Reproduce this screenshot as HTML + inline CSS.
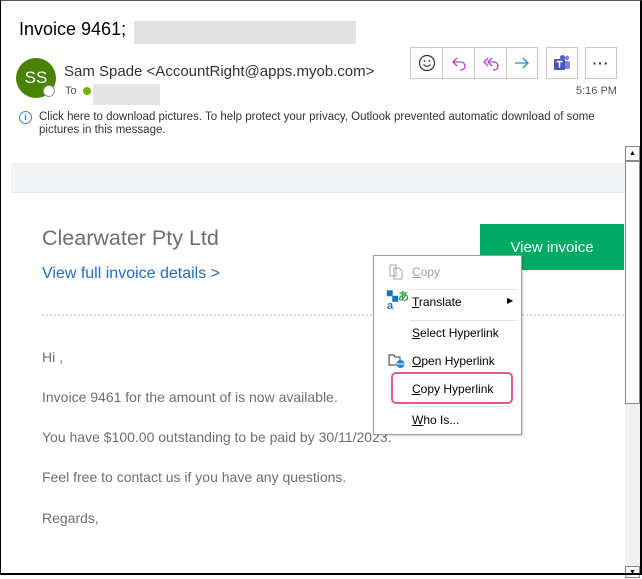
<!DOCTYPE html>
<html><head><style>
*{margin:0;padding:0;box-sizing:border-box}
body{width:642px;height:575px;overflow:hidden;background:#fff;font-family:"Liberation Sans",sans-serif;position:relative}
.frame{position:absolute;left:0;top:0;width:642px;height:575px;border:1px solid #000;border-right:2px solid #000;border-bottom:2px solid #000;border-top:1px solid #555}
.a{position:absolute}
.btn{position:absolute;top:47px;height:32px;border:1px solid #c8c8c8;background:#fff;display:flex;align-items:center;justify-content:center}
.menu{position:absolute;left:373px;top:255px;width:149px;height:180px;background:#fff;border:1px solid #a0a0a0;box-shadow:1px 1px 2px rgba(0,0,0,.2)}
.mi{position:absolute;left:38px;font-size:12px;color:#000}
.sep{position:absolute;left:36px;right:4px;height:1px;background:#e3e3e3}
.body{font-size:14px;color:#6b6f73}
</style></head><body>
<div class="a" style="left:19px;top:19px;font-size:18px;color:#000">Invoice 9461;</div>
<div class="a" style="left:134px;top:21px;width:222px;height:23px;background:#e2e2e2"></div>
<div class="a" style="left:16px;top:58px;width:40px;height:40px;border-radius:50%;background:#498205;color:#fff;font-size:17px;display:flex;align-items:center;justify-content:center">SS</div>
<div class="a" style="left:43px;top:85px;width:12px;height:12px;border-radius:50%;background:#fff;border:1px solid #999"></div>
<div class="a" style="left:64px;top:63px;font-size:15px;color:#333">Sam Spade &lt;AccountRight@apps.myob.com&gt;</div>
<div class="a" style="left:65px;top:85px;font-size:11px;color:#555">To</div>
<div class="a" style="left:83px;top:87px;width:8px;height:8px;border-radius:50%;background:#6bb700"></div>
<div class="a" style="left:93px;top:84px;width:67px;height:21px;background:#e6e6e6"></div>
<div class="btn" style="left:410px;width:33px"><svg width="18" height="18" viewBox="0 0 18 18"><circle cx="9" cy="9" r="7.5" fill="none" stroke="#333" stroke-width="1.2"/><circle cx="6.5" cy="7" r=".9" fill="#333"/><circle cx="11.5" cy="7" r=".9" fill="#333"/><path d="M5.5 10.5q3.5 3.5 7 0" fill="none" stroke="#333" stroke-width="1.1"/></svg></div>
<div class="btn" style="left:442px;width:33px"><svg width="18" height="18" viewBox="0 0 18 18"><path d="M7 4L3 8l4 4M3 8h8a4 4 0 0 1 0 8h-1" fill="none" stroke="#b146c2" stroke-width="1.3"/></svg></div>
<div class="btn" style="left:474px;width:33px"><svg width="18" height="18" viewBox="0 0 18 18"><path d="M6 4L2 8l4 4M10 4L6 8l4 4M6 8h6a4 4 0 0 1 0 8h-1" fill="none" stroke="#b146c2" stroke-width="1.3"/></svg></div>
<div class="btn" style="left:506px;width:32px"><svg width="18" height="18" viewBox="0 0 18 18"><path d="M2 9h13M10 4l5 5-5 5" fill="none" stroke="#2b88d8" stroke-width="1.3"/></svg></div>
<div class="btn" style="left:546px;width:32px"><svg width="18" height="18" viewBox="0 0 18 18"><circle cx="14" cy="4" r="2.2" fill="#7b83eb"/><rect x="11" y="7" width="6" height="8" rx="2" fill="#7b83eb"/><circle cx="9.5" cy="3.5" r="2.5" fill="#5059c9"/><rect x="1" y="5" width="11" height="11" rx="1" fill="#4b53bc"/><path d="M3.5 7.5h6M6.5 7.5v6" stroke="#fff" stroke-width="1.5"/></svg></div>
<div class="btn" style="left:585px;width:32px;font-size:14px;font-weight:bold;color:#333;letter-spacing:1px">···</div>
<div class="a" style="left:576px;top:85px;font-size:11px;color:#555">5:16 PM</div>
<div class="a" style="left:19px;top:111px;width:13px;height:13px;border-radius:50%;border:1px solid #2b88d8;color:#2b88d8;font-size:9px;font-weight:bold;text-align:center;line-height:11px">i</div>
<div class="a" style="left:39px;top:111px;font-size:11.5px;color:#333;line-height:13px;width:580px">Click here to download pictures. To help protect your privacy, Outlook prevented automatic download of some pictures in this message.</div>

<div class="a" style="left:11px;top:163px;width:614px;height:30px;background:#f2f3f4;border-bottom:1px solid #e4e6e8"></div>
<div class="a" style="left:42px;top:226px;font-size:21.5px;color:#6b6f73">Clearwater Pty Ltd</div>
<div class="a" style="left:42px;top:265px;font-size:16px;color:#1f6bc8">View full invoice details &gt;</div>
<div class="a" style="left:480px;top:224px;width:144px;height:46px;background:#00aa65;color:#fff;font-size:15px;display:flex;align-items:center;justify-content:center">View invoice</div>
<div class="a" style="left:42px;top:314px;width:582px;border-top:2px dotted #dcdcdc"></div>
<div class="a body" style="left:42px;top:349px">Hi ,</div>
<div class="a body" style="left:42px;top:389px">Invoice 9461 for the amount of is now available.</div>
<div class="a body" style="left:42px;top:429px">You have $100.00 outstanding to be paid by 30/11/2023.</div>
<div class="a body" style="left:42px;top:469px">Feel free to contact us if you have any questions.</div>
<div class="a body" style="left:42px;top:510px">Regards,</div>

<div class="a" style="left:625px;top:146px;width:15px;height:429px;background:#f0f0f0"></div>
<div class="a" style="left:625px;top:146px;width:15px;height:15px;border:1px solid #888;background:#fff;font-size:7px;text-align:center;line-height:13px">▲</div>
<div class="a" style="left:625px;top:161px;width:15px;height:243px;border:1px solid #888;background:#fff"></div>
<div class="a" style="left:625px;top:566px;width:15px;height:12px;border:1px solid #888;background:#fff;font-size:7px;text-align:center;line-height:12px">▼</div>

<div class="menu">
<svg class="a" style="left:14px;top:8px" width="16" height="16" viewBox="0 0 16 16"><path d="M2 1h6v11H2zM6 4h5l3 3v8H6z" fill="#fff" stroke="#aaa"/></svg>
<div class="mi" style="top:9px;color:#a0a0a0"><u>C</u>opy</div>
<div class="sep" style="top:33px"></div>
<div class="a" style="left:13px;top:37px;font-size:11px;font-weight:bold;line-height:9px"><span style="color:#1c75bc">▚</span><span style="color:#2e9e3e">あ</span><br><span style="color:#1c75bc">a</span></div>
<div class="mi" style="top:39px"><u>T</u>ranslate</div>
<div class="a" style="left:133px;top:40px;font-size:8px">▶</div>
<div class="sep" style="top:64px"></div>
<div class="mi" style="top:70px"><u>S</u>elect Hyperlink</div>
<svg class="a" style="left:14px;top:97px" width="18" height="16" viewBox="0 0 18 16"><path d="M1 2h5l1 2h5v8H1z" fill="#fff" stroke="#333"/><circle cx="12.5" cy="11" r="4" fill="#1c86d1"/><path d="M9 11h7" stroke="#fff"/></svg>
<div class="mi" style="top:98px"><u>O</u>pen Hyperlink</div>
<div class="a" style="left:17px;top:116px;width:122px;height:32px;border:2px solid #e05a9a;border-radius:5px"></div>
<div class="mi" style="top:126px"><u>C</u>opy Hyperlink</div>
<div class="sep" style="top:150px"></div>
<div class="mi" style="top:157px"><u>W</u>ho Is...</div>
</div>
<div class="frame"></div>
</body></html>
